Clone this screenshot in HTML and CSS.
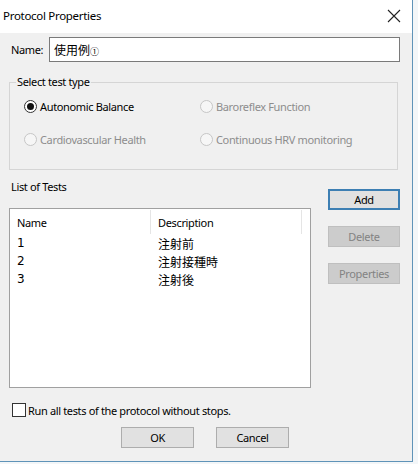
FILE: index.html
```html
<!DOCTYPE html>
<html>
<head>
<meta charset="utf-8">
<link rel="stylesheet" href="styles.css">
</head>
<body>
<div class="window">
  <div class="titlebar">
    <span class="title">Protocol Properties</span>
    <svg class="close" width="14" height="14" viewBox="0 0 14 14"><path d="M1 1 L13 13 M13 1 L1 13" stroke="#222" stroke-width="1.1" fill="none"/></svg>
  </div>
  <div class="content">
    <div class="name-row">
      <span class="name-label">Name:</span>
      <div class="textbox">使用例<span class="circled">①</span></div>
    </div>
    <div class="group">
      <span class="legend">Select test type</span>
      <div class="radios">
        <div class="radio-item"><span class="radio checked"></span><span>Autonomic Balance</span></div>
        <div class="radio-item disabled"><span class="radio"></span><span>Baroreflex Function</span></div>
        <div class="radio-item disabled"><span class="radio"></span><span>Cardiovascular Health</span></div>
        <div class="radio-item disabled"><span class="radio"></span><span>Continuous HRV monitoring</span></div>
      </div>
    </div>
    <div class="tests-row">
      <div class="tests-col">
        <div class="tests-label">List of Tests</div>
        <div class="listbox">
          <div class="list-header">
            <div class="col-name">Name</div>
            <div class="col-desc">Description</div>
            <div class="col-rest"></div>
          </div>
          <div class="list-row"><div class="col-name">1</div><div class="col-desc cjk">注射前</div></div>
          <div class="list-row"><div class="col-name">2</div><div class="col-desc cjk">注射接種時</div></div>
          <div class="list-row"><div class="col-name">3</div><div class="col-desc cjk">注射後</div></div>
        </div>
      </div>
      <div class="side-buttons">
        <div class="btn default">Add</div>
        <div class="btn disabled">Delete</div>
        <div class="btn disabled">Properties</div>
      </div>
    </div>
    <div class="check-row">
      <span class="checkbox"></span>
      <span>Run all tests of the protocol without stops.</span>
    </div>
    <div class="bottom-buttons">
      <div class="btn">OK</div>
      <div class="btn">Cancel</div>
    </div>
  </div>
</div>
</body>
</html>
```

FILE: styles.css
```css
html, body {
  margin: 0;
  padding: 0;
  background: #f3f6f8;
}
body {
  font-family: "Noto Sans", "Noto Sans CJK JP", sans-serif;
  font-size: 11px;
  letter-spacing: -0.35px;
  color: #000;
}
.window {
  width: 412px;
  height: 461px;
  border-right: 1px solid #5f93b8;
  border-bottom: 1px solid #5f93b8;
  display: flex;
  flex-direction: column;
  background: #f0f0f0;
}
.titlebar {
  height: 33px;
  background: #fff;
  display: flex;
  align-items: center;
  justify-content: space-between;
  padding: 0 11px 0 3px;
  flex: none;
}
.title {
  font-size: 11.5px;
  letter-spacing: -0.3px;
  color: #000;
  margin-top: -2px;
}
.close {
  display: block;
  margin-top: -1px;
}
.content {
  flex: 1;
  padding: 4px 12px 0 9px;
  display: flex;
  flex-direction: column;
}
.name-row {
  display: flex;
  align-items: center;
  height: 25px;
}
.name-label {
  width: 38px;
  padding-left: 2px;
}
.textbox {
  flex: 1;
  box-sizing: border-box;
  height: 25px;
  border: 1px solid #7a7a7a;
  background: #fff;
  padding: 3px 4px;
  font-family: "Noto Sans CJK JP", sans-serif;
  font-size: 12px;
  letter-spacing: 0;
  line-height: 17px;
}
.circled {
  font-size: 9px;
}
.group {
  margin-top: 20px;
  margin-right: 2px;
  height: 88px;
  box-sizing: border-box;
  border: 1px solid #d5d5d5;
  display: flex;
  flex-direction: column;
}
.legend {
  align-self: flex-start;
  margin: -9px 0 0 6px;
  padding: 0 1px;
  background: #f0f0f0;
  line-height: 16px;
}
.radios {
  display: grid;
  grid-template-columns: 176px 1fr;
  row-gap: 13px;
  padding: 6px 0 0 14px;
}
.radio-item {
  display: flex;
  align-items: center;
  height: 20px;
}
.radio-item.disabled {
  color: #8d8d8d;
}
.radio {
  width: 11px;
  height: 11px;
  border: 1px solid #333;
  border-radius: 50%;
  background: #fff;
  margin-right: 3px;
  position: relative;
  flex: none;
}
.radio.checked::after {
  content: "";
  position: absolute;
  left: 2px;
  top: 2px;
  width: 7px;
  height: 7px;
  border-radius: 50%;
  background: #111;
}
.radio-item.disabled .radio {
  border-color: #c6c6c6;
  background: #f6f6f6;
}
.tests-row {
  display: flex;
  margin-top: 9px;
}
.tests-col {
  width: 303px;
  display: flex;
  flex-direction: column;
}
.tests-label {
  line-height: 16px;
  padding-left: 2px;
}
.listbox {
  margin-top: 13px;
  height: 180px;
  box-sizing: border-box;
  border: 1px solid #a0a0a0;
  background: #fff;
}
.list-header {
  display: flex;
  height: 24px;
  align-items: stretch;
  padding-top: 1px;
}
.list-header .col-name,
.list-header .col-desc {
  border-right: 1px solid #e5e5e5;
}
.list-header > div {
  display: flex;
  align-items: center;
}
.col-name {
  width: 133px;
  padding-left: 7px;
}
.col-desc {
  width: 143px;
  padding-left: 7px;
}
.col-rest {
  flex: 1;
}
.list-row {
  display: flex;
  height: 18px;
  align-items: center;
  font-size: 12px;
  letter-spacing: 0;
}
.list-row .col-name {
  font-family: "DejaVu Sans", sans-serif;
  font-size: 12px;
  width: 133px;
  padding-right: 1px;
}
.cjk {
  font-family: "Noto Sans CJK JP", sans-serif;
  font-size: 12px;
}
.side-buttons {
  display: flex;
  flex-direction: column;
  margin-left: 17px;
  margin-top: 10px;
  gap: 16px;
}
.btn {
  width: 72px;
  height: 21px;
  box-sizing: border-box;
  border: 1px solid #adadad;
  background: #e1e1e1;
  display: flex;
  align-items: center;
  justify-content: center;
}
.btn.default {
  border: 2px solid #3d7fb3;
}
.btn.disabled {
  background: #cccccc;
  border-color: #bfbfbf;
  color: #838383;
}
.check-row {
  display: flex;
  align-items: center;
  height: 16px;
  margin-top: 14px;
  padding-left: 3px;
}
.checkbox {
  width: 12px;
  height: 12px;
  border: 1px solid #333;
  background: #fff;
  margin-right: 2px;
  flex: none;
}
.bottom-buttons {
  display: flex;
  gap: 22px;
  margin-top: 9px;
  padding-left: 112px;
}
.bottom-buttons .btn {
  width: 73px;
}
```
